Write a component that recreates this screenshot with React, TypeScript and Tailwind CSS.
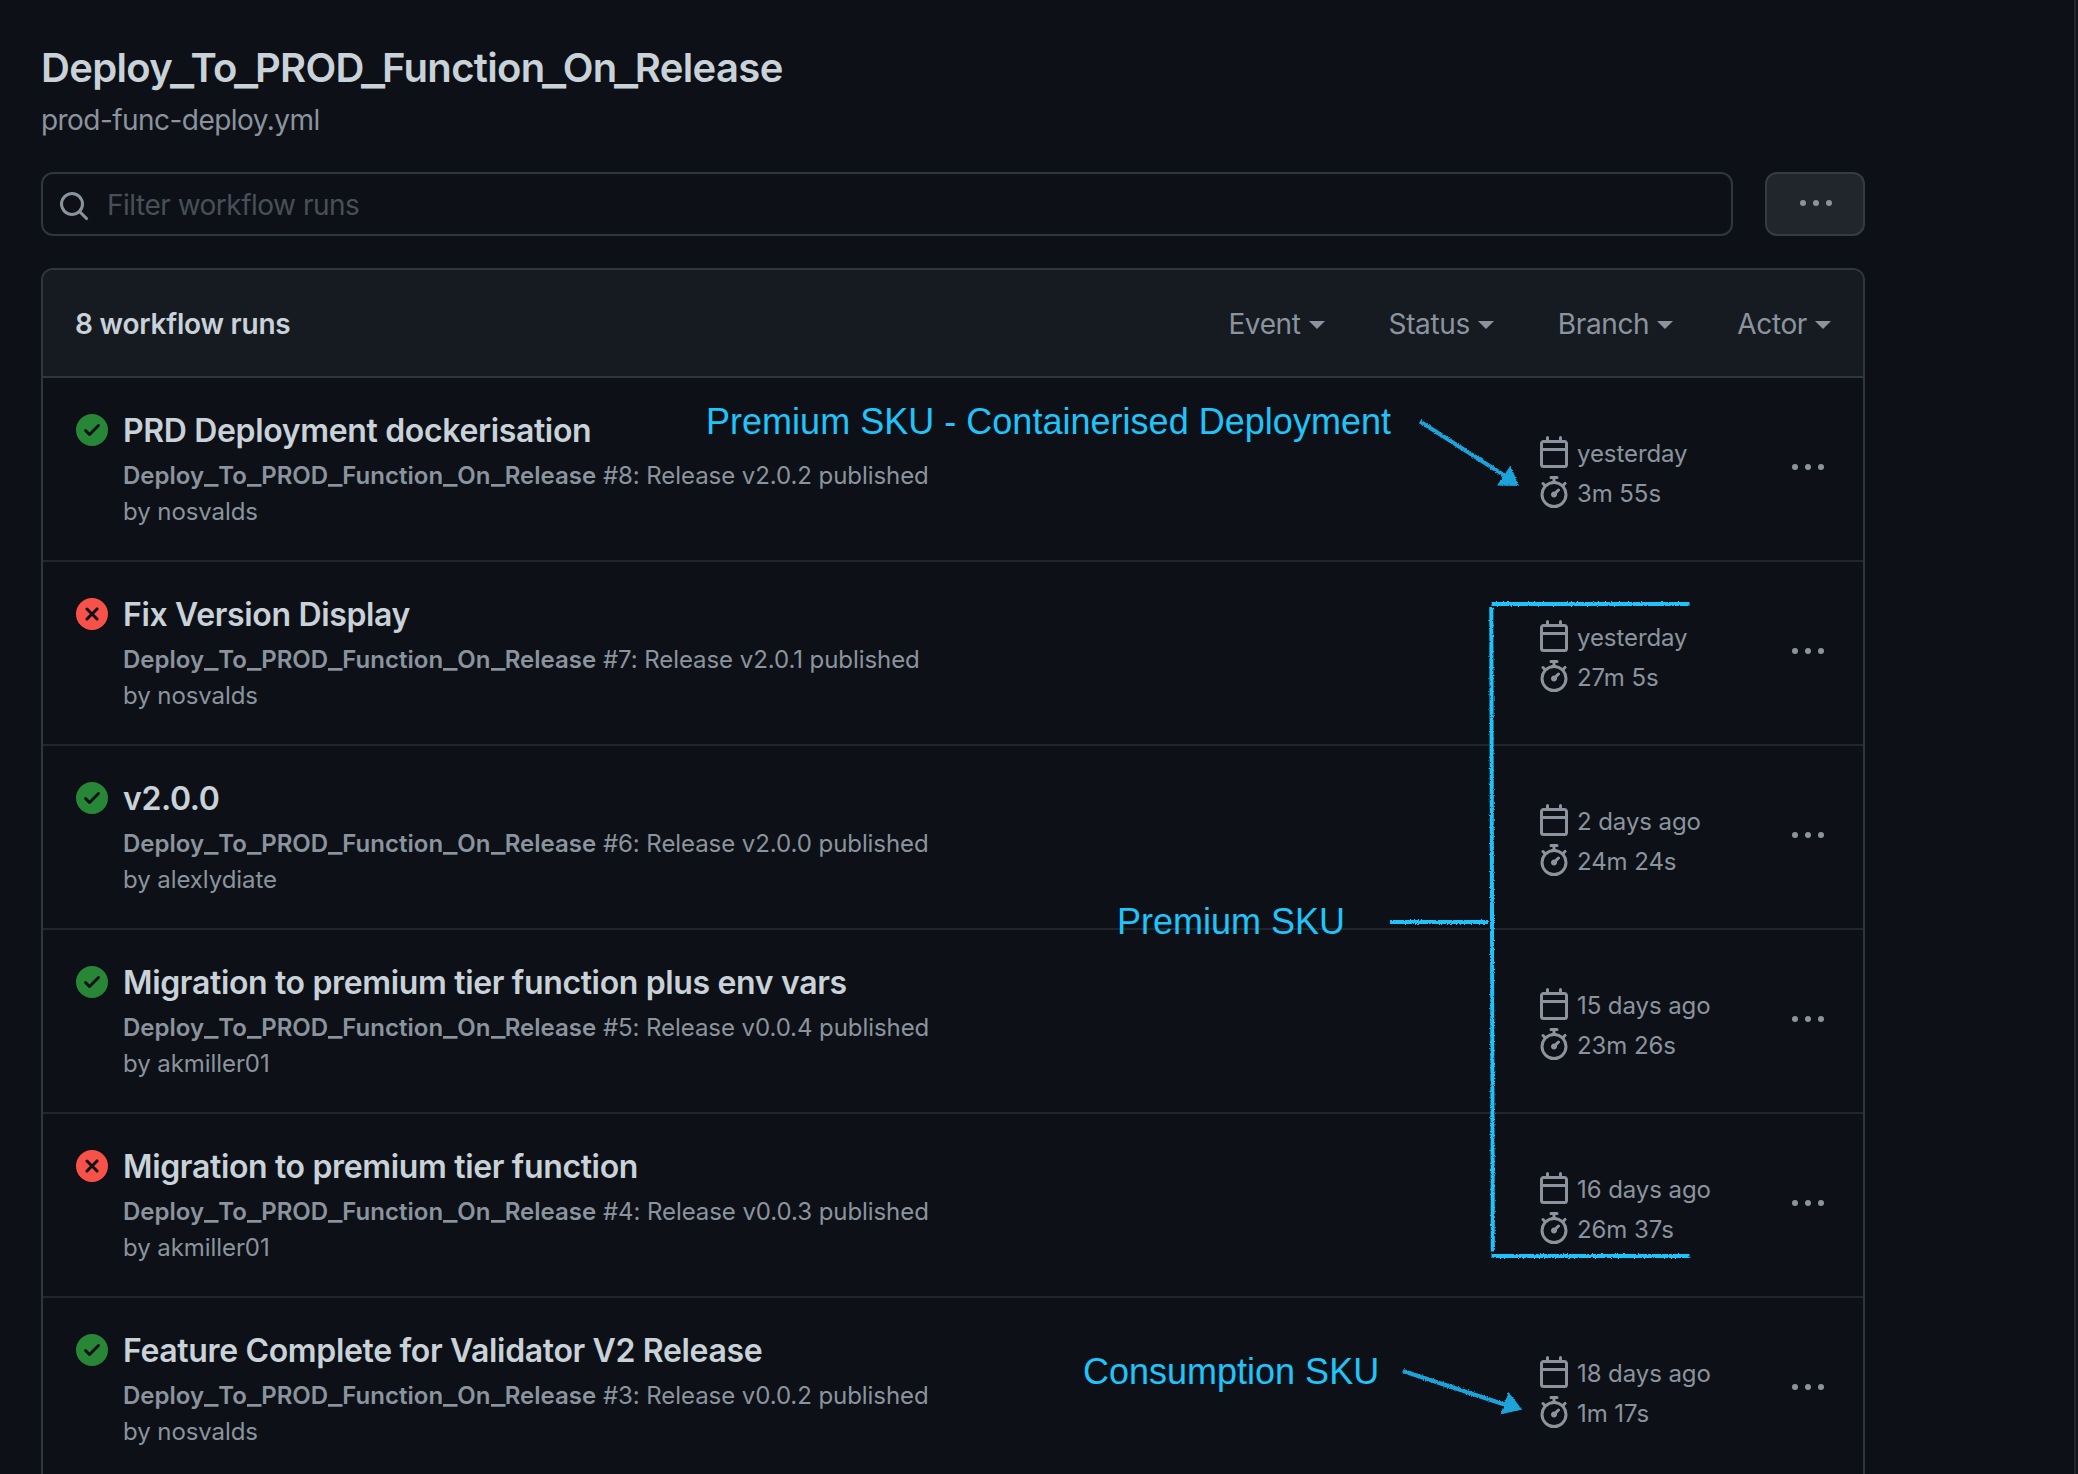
import React from "react";

type Run = {
  ok: boolean;
  title: string;
  num: number;
  version: string;
  actor: string;
  when: string;
  duration: string;
};

const workflow = "Deploy_To_PROD_Function_On_Release";

const runs: Run[] = [
  { ok: true, title: "PRD Deployment dockerisation", num: 8, version: "v2.0.2", actor: "nosvalds", when: "yesterday", duration: "3m 55s" },
  { ok: false, title: "Fix Version Display", num: 7, version: "v2.0.1", actor: "nosvalds", when: "yesterday", duration: "27m 5s" },
  { ok: true, title: "v2.0.0", num: 6, version: "v2.0.0", actor: "alexlydiate", when: "2 days ago", duration: "24m 24s" },
  { ok: true, title: "Migration to premium tier function plus env vars", num: 5, version: "v0.0.4", actor: "akmiller01", when: "15 days ago", duration: "23m 26s" },
  { ok: false, title: "Migration to premium tier function", num: 4, version: "v0.0.3", actor: "akmiller01", when: "16 days ago", duration: "26m 37s" },
  { ok: true, title: "Feature Complete for Validator V2 Release", num: 3, version: "v0.0.2", actor: "nosvalds", when: "18 days ago", duration: "1m 17s" },
];

const paths = {
  search: "M11.5 7a4.499 4.499 0 11-8.998 0A4.499 4.499 0 0111.5 7zm-.82 4.74a6 6 0 111.06-1.06l3.04 3.04a.75.75 0 11-1.06 1.06l-3.04-3.04z",
  check: "M8 16A8 8 0 108 0a8 8 0 000 16zm3.78-9.72a.75.75 0 00-1.06-1.06L6.75 9.19 5.28 7.72a.75.75 0 00-1.06 1.06l2 2a.75.75 0 001.06 0l4.5-4.5z",
  cross: "M2.343 13.657A8 8 0 1113.657 2.343 8 8 0 012.343 13.657zM6.03 4.97a.75.75 0 00-1.06 1.06L6.94 8 4.97 9.97a.75.75 0 101.06 1.06L8 9.06l1.97 1.97a.75.75 0 101.06-1.06L9.06 8l1.97-1.97a.75.75 0 10-1.06-1.06L8 6.94 6.03 4.97z",
  calendar: "M4.75 0a.75.75 0 01.75.75V2h5V.75a.75.75 0 011.5 0V2h1.25c.966 0 1.75.784 1.75 1.75v10.5A1.75 1.75 0 0113.25 16H2.75A1.75 1.75 0 011 14.25V3.75C1 2.784 1.784 2 2.75 2H4V.75A.75.75 0 014.75 0zm0 3.5h8.5a.25.25 0 01.25.25V6h-11V3.75a.25.25 0 01.25-.25h2zm-2.25 4v6.75c0 .138.112.25.25.25h10.5a.25.25 0 00.25-.25V7.5h-11z",
  stopwatch: "M5.75.75A.75.75 0 016.5 0h3a.75.75 0 010 1.5h-.75v1l-.001.041a6.718 6.718 0 013.464 1.435l.007-.006.75-.75a.75.75 0 111.06 1.06l-.75.75-.006.007a6.75 6.75 0 11-10.548 0L2.72 5.03l-.75-.75a.75.75 0 011.06-1.06l.75.75.007.006A6.718 6.718 0 017.25 2.541a.756.756 0 010-.041v-1H6.5a.75.75 0 01-.75-.75zM8 14.5A5.25 5.25 0 108 4a5.25 5.25 0 000 10.5zm.389-6.7l1.33-1.33a.75.75 0 111.061 1.06L9.45 8.861A1.502 1.502 0 018 10.75a1.5 1.5 0 11.389-2.95z",
  kebab: "M8 9a1.5 1.5 0 100-3 1.5 1.5 0 000 3zM1.5 9a1.5 1.5 0 100-3 1.5 1.5 0 000 3zm13 0a1.5 1.5 0 100-3 1.5 1.5 0 000 3z",
};

function Icon({ name, className = "" }: { name: keyof typeof paths; className?: string }) {
  return (
    <svg viewBox="0 0 16 16" className={`size-8 shrink-0 fill-current ${className}`} aria-hidden="true">
      <path fillRule="evenodd" d={paths[name]} />
    </svg>
  );
}

/** The workflow's name, with underscores drawn wider than the font's own. */
function WorkflowName({ underscore = "" }: { underscore?: string }) {
  return (
    <>
      {workflow.split("_").map((part, i) => (
        <React.Fragment key={part}>
          {i > 0 && <span className={`inline-block w-[0.59em] origin-left scale-x-[1.27] font-bold ${underscore}`}>_</span>}
          {part}
        </React.Fragment>
      ))}
    </>
  );
}

function Filter({ label }: { label: string }) {
  return (
    <button className="flex items-center gap-2 text-[28px] leading-[42px] tracking-[-0.37px] text-[#8b949e]">
      {label}
      <svg viewBox="0 0 16 8" className="mt-0.5 h-2 w-4 fill-current" aria-hidden="true">
        <path d="M0 0h16L8 8z" />
      </svg>
    </button>
  );
}

function RunRow({ run }: { run: Run }) {
  return (
    <li className="flex h-[184px] border-b-2 border-[#21262d] pl-[33px] pt-9">
      <Icon name={run.ok ? "check" : "cross"} className={run.ok ? "text-[#288637]" : "text-[#f85149]"} />
      <div className="-mt-[3px] ml-[15px] w-[1415px]">
        <h2 className="text-[32px] font-semibold leading-[40px] tracking-[-0.35px] text-[#c9d1d9]">{run.title}</h2>
        <p className="mt-[7px] text-[24px] leading-9 tracking-[-0.07px] text-[#8b949e]">
          <span className="font-semibold tracking-[0.02px]"><WorkflowName /></span> #{run.num}: Release {run.version} published
          <br />
          by {run.actor}
        </p>
      </div>
      <div className="mt-[22px] flex w-[254px] flex-col gap-2 text-[24px] leading-9 tracking-[-0.08px] text-[#8b949e]">
        <span className="flex h-8 gap-[7px]"><Icon name="calendar" />{run.when}</span>
        <span className="flex h-8 gap-[7px]"><Icon name="stopwatch" />{run.duration}</span>
      </div>
      <button className="mt-[38px] size-8 text-[#8b949e]"><Icon name="kebab" /></button>
    </li>
  );
}

function Annotations() {
  return (
    <div className="pointer-events-none absolute inset-0 whitespace-nowrap font-['Liberation_Sans',sans-serif] text-[36px] leading-[42px] text-[#1fc4fb]">
      <span className="absolute left-[706px] top-[401px] tracking-[0.02px]">Premium SKU - Containerised Deployment</span>
      <span className="absolute left-[1117px] top-[901px]">Premium SKU</span>
      <span className="absolute left-[1083px] top-[1351px]">Consumption SKU</span>
      <svg className="absolute inset-0 size-full" viewBox="0 0 2078 1474" fill="none" strokeWidth="4" aria-hidden="true">
        <filter id="chalk" filterUnits="userSpaceOnUse" x="1380" y="400" width="330" height="1040">
          <feTurbulence type="fractalNoise" baseFrequency="0.7" numOctaves="2" seed="4" result="n" />
          <feDisplacementMap in="SourceGraphic" in2="n" scale="3" xChannelSelector="R" yChannelSelector="G" />
        </filter>
        <g filter="url(#chalk)">
          <path stroke="#1fc4fb" d="M1491.500 604H1689.500M1491.300 607L1492.800 1251.500M1491.500 1256H1689.500M1390 922H1488" />
          <path stroke="#1ba3da" d="M1420 421.500L1506 476.500M1403 1371L1507.500 1405.500" />
          <path fill="#1ba3da" d="M1510.500 465.500L1519 486L1497 485.500ZM1508.500 1392L1522 1409.500L1500.500 1414.500Z" />
        </g>
      </svg>
    </div>
  );
}

export default function App() {
  return (
    <div className="relative flex h-[1474px] w-[2078px] justify-between overflow-hidden bg-[#0d1117] font-[Inter,sans-serif]">
      <main className="ml-[41px] w-[1824px] pt-11">
        <h1 className="text-[40px] font-semibold leading-[48px] tracking-[-0.65px] text-[#c9d1d9]">
          <WorkflowName underscore="-mx-[0.068em] translate-y-[1.5px]" />
        </h1>
        <p className="mt-[7px] text-[28px] leading-[42px] tracking-[-0.55px] text-[#8b949e]">prod-func-deploy.yml</p>
        <div className="mt-[31px] flex h-16 gap-8">
          <div className="flex flex-1 items-center gap-[17px] rounded-xl border-2 border-[#30363d] pl-[15px] text-[28px] tracking-[-0.5px] text-[#484f58]">
            <Icon name="search" className="mt-1 text-[#8b949e]" />
            <span className="pt-0.5">Filter workflow runs</span>
          </div>
          <button className="flex w-[100px] items-center justify-center rounded-xl border-2 border-[#363b42] bg-[#21262d] pl-0.5 text-[#8b949e]">
            <Icon name="kebab" />
          </button>
        </div>
        <section className="mt-8 h-[1300px] overflow-hidden rounded-xl border-2 border-[#30363d]">
          <header className="flex h-[108px] items-center justify-between border-b-2 border-[#30363d] bg-[#161b22] px-8 pt-0.5">
            <strong className="text-[28px] font-semibold leading-[42px] tracking-[-0.22px] text-[#c9d1d9]">8 workflow runs</strong>
            <div className="flex gap-16">
              <Filter label="Event" />
              <Filter label="Status" />
              <Filter label="Branch" />
              <Filter label="Actor" />
            </div>
          </header>
          <ul>
            {runs.map((run) => <RunRow key={run.num} run={run} />)}
          </ul>
        </section>
      </main>
      <aside className="w-1 border-l-2 border-[#24282e] bg-[#12161c]" />
      <Annotations />
    </div>
  );
}
